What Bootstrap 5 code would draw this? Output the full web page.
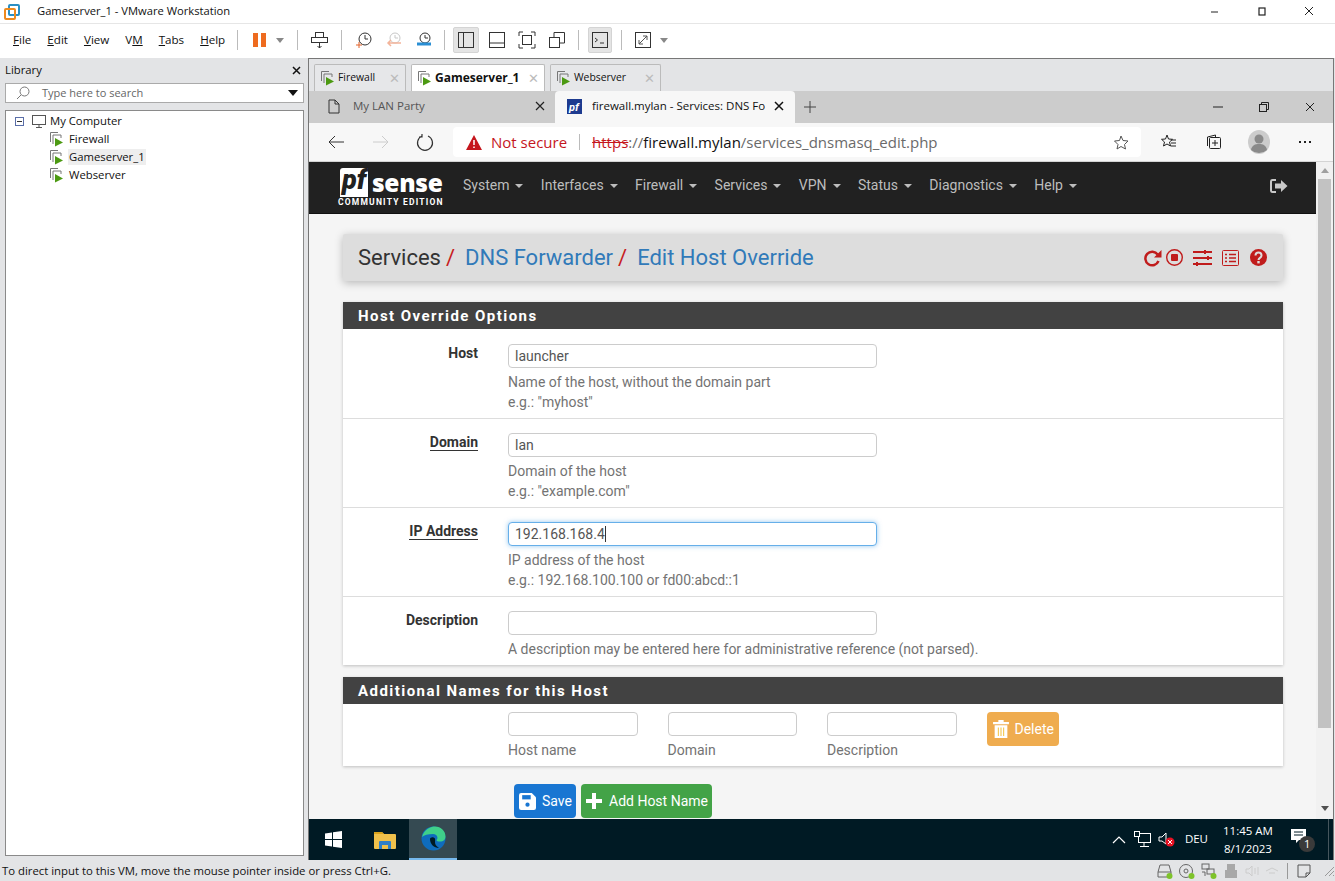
<!DOCTYPE html>
<html lang="en">
<head>
<meta charset="UTF-8" />
<title>Gameserver_1 - VMware Workstation</title>
<link href="https://cdn.jsdelivr.net/npm/bootstrap@5.3.2/dist/css/bootstrap.min.css" rel="stylesheet" />
<script src="https://cdn.jsdelivr.net/npm/bootstrap@5.3.2/dist/js/bootstrap.bundle.min.js" defer></script>
<style>
html, body { height: 881px; overflow: hidden; }
body { width: 1335px; background: #e3e4e6; font-family: "Open Sans", "Noto Sans", "Liberation Sans", sans-serif; font-size: 12px; color: #111; }
svg { display: block; flex: none; }
.m3 { margin-left: 3px; } .m6 { margin-left: 6px; } .m7 { margin-left: 7px; } .m8 { margin-left: 8px; } .m9 { margin-left: 9px; } .m10 { margin-left: 10px; } .m11 { margin-left: 11px; }
.m12 { margin-left: 12px; } .m13 { margin-left: 13px; } .m15 { margin-left: 15px; } .m19 { margin-left: 19px; } .m20 { margin-left: 20px; }
.m26 { margin-left: 26px; } .m27 { margin-left: 27px; } .m28 { margin-left: 28px; } .m29 { margin-left: 29px; }
.win-title { height: 24px; background: #fff; border-bottom: 1px solid #e6e6e6; padding-left: 4px; }
.win-title .ttl { margin-left: 17px; font-size: 11.2px; }
.win-btns { margin-left: auto; padding-right: 20px; gap: 36px; }
.win-toolbar { height: 34px; background: #fff; padding: 0 0 2px 13px; }
.menu-item { font-size: 11.6px; margin-right: 16px; }
.menu-item u { text-underline-offset: 1px; }
.menu-item.end { margin-right: 0; }
.tb-sep { width: 1px; height: 20px; background: #bbb; }
.tb-btn { width: 18px; height: 26px; display: flex; align-items: center; justify-content: center; }
.tb-btn.on { width: 26px; background: #e4e4e4; border: 1px solid #d4d4d4; border-radius: 2px; }
.tb-btn.on.thin { width: 24px; }
.main-area { height: 802px; }
.lib { width: 308px; padding: 0 4px 0 5px; }
.lib-head { height: 25px; font-size: 11.3px; padding: 0 3px 1px 0; }
.lib-search { height: 20px; background: #fff; border: 1px solid #aaa; padding: 0 4px 0 10px; color: #666; font-size: 11px; }
.lib-search .ph { margin-left: 12px; }
.lib-tree { height: 746px; margin-top: 7px; background: #fff; border: 1px solid #8a8a8a; padding: 1px 0 0 9px; }
.tree-row { height: 18px; font-size: 11.3px; }
.tree-vm { margin-left: 34px; }
.tree-vm span { padding: 0 1px; margin-left: 3px; }
.tree-vm.sel span { background: #eee; }
.pane { width: 1026px; border: 1px solid #777; border-bottom: 0; height: 802px; }
.vm-tabs { height: 32px; padding: 5px 0 0 5px; gap: 5px; background: #e3e4e6; }
.vm-tab { height: 27px; background: #e6e7e9; border: 1px solid #bbb; border-bottom: 0; border-radius: 2px 2px 0 0; padding: 0 5px; font-size: 10.4px; }
.vm-tab span.nm { margin-left: 2px; }
.vm-tab.act { background: #fff; font-weight: 700; font-size: 12px; }
.vt-1 { width: 92px; } .vt-2 { width: 134px; } .vt-3 { width: 111px; }
.vm-tab .xx { margin-left: auto; color: #bbb; font-size: 13px; font-weight: 400; line-height: 1; }
.br-tabs { height: 32px; background: #ccc; }
.br-tab { height: 32px; font-size: 11.5px; padding-bottom: 2px; }
.br-tab.idle { width: 246px; color: #555; padding-left: 19px; padding-right: 10px; }
.br-tab.idle .nm { margin-left: 13px; }
.br-tab.act { width: 240px; background: #f7f7f7; border-radius: 4px 4px 0 0; padding-left: 12px; padding-right: 11px; }
.br-tab.act .nm { margin-left: 10px; width: 173px; overflow: hidden; white-space: nowrap; }
.br-tabs .ctl { margin-left: auto; gap: 36px; padding-right: 18px; }
.addr { height: 39px; background: #f7f7f7; padding-left: 18px; border-bottom: 1px solid #d4d4d4; }
.addr-box { width: 688px; height: 30px; background: #fff; border-radius: 4px; margin-left: 19px; padding: 0 12px 0 13px; font-size: 15px; }
.addr .red { color: #c5161d; margin-left: 9px; }
.addr .grey { color: #6a6a6a; }
.addr .strike { color: #c5161d; text-decoration: line-through; }
.addr-sep { width: 1px; height: 16px; background: #bbb; margin: 0 12px; }
.page-wrap { height: 657px; background: #f5f5f5; }
.page { width: 1007px; font-family: Roboto, "Liberation Sans", sans-serif; font-size: 14px; overflow: hidden; }
.sb { width: 17px; background: #f1f1f1; padding-left: 2px; }
.sb-thumb { height: 549px; width: 13px; margin-top: 6px; background: #c2c2c2; }
.sb-arrow { width: 0; height: 0; margin: 6px 0 0 3px; border-left: 4px solid transparent; border-right: 4px solid transparent; border-bottom: 5px solid #a0a0a0; }
.sb-arrow.dn { margin-top: auto; margin-bottom: 8px; border-bottom: 0; border-top: 5px solid #505050; }
.pf-nav { height: 52px; background: #212121; border-bottom: 1px solid #111; padding: 0 28px 4px 29px; color: #bdbdbd; }
.pf-logo { width: 107px; color: #fff; margin-right: 18px; line-height: 1; padding-top: 4px; }
.pf-logo .top { height: 29px; padding-left: 2px; }
.pf-logo .pf { background: #fff; color: #212121; font-style: italic; font-weight: 900; font-size: 27px; padding: 0 0 0 2px; height: 29px; line-height: 25px; width: 28px; border-radius: 3px 0 0 0; }
.pf-logo .se { font-family: "Open Sans", sans-serif; font-weight: 800; font-size: 24.5px; letter-spacing: -.3px; margin-left: 4px; }
.pf-logo .ce { font-size: 8.5px; font-weight: 700; letter-spacing: 1.2px; white-space: nowrap; margin-top: 1px; }
.pf-menu { gap: 17.4px; font-size: 14px; }
.pf-menu span::after { content: ""; display: inline-block; margin-left: 6px; vertical-align: 2px; border-top: 4px solid #bdbdbd; border-left: 4px solid transparent; border-right: 4px solid transparent; }
.pf-out { margin-left: auto; }
.content { padding: 20px 33px 0 34px; }
.crumb { height: 47px; background: #ddd; border-radius: 2px; box-shadow: 0 2px 8px rgba(0,0,0,.25); padding: 0 16px 0 15px; font-size: 22px; color: #333; }
.crumb .sl { color: #c71c22; margin: 0 10px 0 5px; }
.crumb .lnk { color: #317ab9; }
.crumb .tools { margin-left: auto; }
.box { background: #fff; box-shadow: 0 1px 3px rgba(0,0,0,.22); }
.box-head { height: 27px; background: #424242; color: #fff; font-weight: 700; font-size: 15px; letter-spacing: 1.45px; padding: 2px 0 0 15px; }
.box-1 { margin-top: 21px; }
.box-2 { margin-top: 12px; }
.frow { height: 89px; border-bottom: 1px solid #ddd; padding-top: 14px; }
.frow.first { height: 90px; padding-top: 15px; }
.frow.last { height: 68px; border-bottom: 0; }
.flabel { width: 135px; text-align: right; font-weight: 700; color: #333; line-height: 18px; margin-right: 30px; flex: none; }
.flabel.ul span { border-bottom: 1px solid #333; }
.ffield { width: 369px; color: #737373; line-height: 20px; }
.pf-input { width: 369px; height: 24px; background: #fff; border: 1px solid #ccc; border-radius: 4px; color: #555; padding: 0 6px; margin-bottom: 4px; line-height: 22px; }
.pf-input.foc { border-color: #66afe9; box-shadow: 0 0 5px rgba(102,175,233,.7); }
.text-caret { display: inline-block; width: 1px; height: 16px; background: #333; vertical-align: -3px; }
.add-row { height: 62px; padding: 8px 0 0 165px; gap: 30px; }
.add-col { width: 129.5px; color: #737373; }
.add-col .pf-input { width: 100%; margin-bottom: 4px; }
.pf-btn { height: 34px; border-radius: 4px; color: #fff; font-size: 14px; padding: 0 5px; gap: 6px; white-space: nowrap; }
.btn-del { background: #efac4f; width: 72px; padding-left: 6px; }
.btn-save { background: #1976d2; width: 62px; }
.btn-add { background: #43a347; width: 131px; gap: 7px; }
.act-row { padding: 18px 0 0 171px; gap: 5px; }
.taskbar { height: 41px; background: #001a24; color: #fff; font-size: 12px; }
.tk-start { width: 52px; padding-right: 3px; }
.tk-icon { width: 48px; height: 41px; display: flex; align-items: center; justify-content: center; }
.tk-icon.act { background: #354a52; border-bottom: 2px solid #76b9ed; }
.tray { margin-left: auto; align-self: stretch; padding-right: 4px; }
.tray-lang { font-size: 11.5px; margin-left: 10px; padding-bottom: 2px; }
.clock { text-align: center; line-height: 18px; width: 62px; margin: 0 0 0 9px; font-size: 11.5px; }
.show-desk { width: 1px; align-self: stretch; background: #46565d; margin-left: 12px; }
.status { height: 21px; font-size: 11.35px; padding-left: 2px; }
.stat-icons { margin-left: auto; gap: 6px; }
.stat-sep { width: 1px; height: 16px; background: #999; margin: 0 3px 0 2px; }
</style>
</head>
<body>
<div class="win-title d-flex align-items-center">
  <svg width="16" height="16" viewBox="0 0 16 16"><rect x="5" y="1" width="10" height="10" rx="1" fill="none" stroke="#2a8fc4" stroke-width="2"/><rect x="1" y="5" width="10" height="10" rx="1" fill="none" stroke="#ee8a1e" stroke-width="2"/></svg>
  <span class="ttl">Gameserver_1 - VMware Workstation</span>
  <div class="win-btns d-flex align-items-center">
    <svg width="11" height="11" viewBox="0 0 11 11"><path d="M1 6h7" stroke="#222" stroke-width="1"/></svg>
    <svg width="11" height="11" viewBox="0 0 11 11"><rect x="2" y="2" width="6" height="7" fill="none" stroke="#222" stroke-width="1.2"/></svg>
    <svg width="11" height="11" viewBox="0 0 11 11"><path d="M1 1l8 8M9 1l-8 8" stroke="#222" stroke-width="1"/></svg>
  </div>
</div>
<div class="win-toolbar d-flex align-items-center">
  <span class="menu-item"><u>F</u>ile</span>
  <span class="menu-item"><u>E</u>dit</span>
  <span class="menu-item"><u>V</u>iew</span>
  <span class="menu-item">V<u>M</u></span>
  <span class="menu-item"><u>T</u>abs</span>
  <span class="menu-item end"><u>H</u>elp</span>
  <div class="tb-sep m12"></div>
  <svg class="m15" width="13" height="16" viewBox="0 0 13 16"><path d="M0 1h5v14H0zM8 1h5v14H8z" fill="#ee6b1f"/></svg>
  <svg class="m10" width="9" height="5" viewBox="0 0 9 5"><path d="M0 0h8L4 5z" fill="#888"/></svg>
  <div class="tb-sep m12"></div>
  <svg class="m13" width="17" height="20" viewBox="0 0 17 20" fill="none" stroke="#333"><rect x="4.500" y="2.500" width="8" height="5"/><rect x=".5" y="7.500" width="16" height="5"/><path d="M8.500 13v5M6.500 16l2 2 2-2"/></svg>
  <div class="tb-sep m13"></div>
  <div class="tb-btn m13"><svg width="18" height="18" viewBox="0 0 18 18" fill="none" stroke="#333"><circle cx="10" cy="8" r="6"/><path d="M10 4v4h3"/><path d="M1 14h6M4 11v6" stroke="#e2622b"/></svg></div>
  <div class="tb-btn m12"><svg width="18" height="18" viewBox="0 0 18 18" fill="none" stroke="#c8c8c8"><circle cx="10" cy="7" r="5"/><path d="M10 4v3h3"/><path d="M3 12h13M6 9l-3 3 3 3" stroke="#f3b49a" stroke-width="1.500"/></svg></div>
  <div class="tb-btn m12"><svg width="18" height="18" viewBox="0 0 18 18" fill="none" stroke="#333"><circle cx="10" cy="7" r="5"/><path d="M10 4v3h3"/><path d="M2 13h14" stroke="#2a8fd4" stroke-width="3"/></svg></div>
  <div class="tb-sep m11"></div>
  <div class="tb-btn on m8"><svg width="18" height="18" viewBox="0 0 18 18" fill="none" stroke="#333"><rect x="1.500" y="1.500" width="15" height="15"/><path d="M6.500 2v14"/></svg></div>
  <div class="tb-btn m9"><svg width="18" height="18" viewBox="0 0 18 18" fill="none" stroke="#333"><rect x="1.500" y="1.500" width="15" height="15"/><path d="M2 12h14"/></svg></div>
  <div class="tb-btn m12"><svg width="18" height="18" viewBox="0 0 18 18" fill="none" stroke="#333"><path d="M1 5V1h4M13 1h4v4M17 13v4h-4M5 17H1v-4"/><rect x="4.500" y="4.500" width="9" height="9"/></svg></div>
  <div class="tb-btn m12"><svg width="18" height="18" viewBox="0 0 18 18" fill="none" stroke="#333"><rect x="1.500" y="6.500" width="10" height="10"/><path d="M6 6V1.500h10.500V12H12"/></svg></div>
  <div class="tb-sep m12"></div>
  <div class="tb-btn on thin m9"><svg width="18" height="18" viewBox="0 0 18 18" fill="none" stroke="#333"><rect x="1.500" y="1.500" width="15" height="15"/><path d="M4 7l2.500 2L4 11M9 12h4"/></svg></div>
  <div class="tb-sep m9"></div>
  <svg class="m12" width="18" height="18" viewBox="0 0 18 18" fill="none" stroke="#333"><rect x="1.500" y="1.500" width="15" height="15"/><path d="M5 13l8-8M9 5h4v4M5 9v4h4" stroke="#555"/></svg>
  <svg class="m8" width="9" height="5" viewBox="0 0 9 5"><path d="M0 0h8L4 5z" fill="#888"/></svg>
</div>

<div class="main-area d-flex">
  <div class="lib">
    <div class="lib-head d-flex align-items-center justify-content-between"><span>Library</span>
      <svg width="9" height="9" viewBox="0 0 9 9"><path d="M1 1l7 7M8 1L1 8" stroke="#111" stroke-width="1.500"/></svg></div>
    <div class="lib-search d-flex align-items-center">
      <svg width="14" height="14" viewBox="0 0 14 14" fill="none" stroke="#777"><circle cx="8.500" cy="5.500" r="4.500"/><path d="M5 9l-4 4"/></svg>
      <span class="ph">Type here to search</span>
      <svg class="ms-auto" width="11" height="6" viewBox="0 0 11 6"><path d="M0 0h10L5 6z" fill="#111"/></svg>
    </div>
    <div class="lib-tree">
      <div class="tree-row d-flex align-items-center">
        <svg width="9" height="9" viewBox="0 0 9 9" fill="none" stroke="#5a6ea8"><rect x=".5" y=".5" width="8" height="8"/><path d="M2 4.500h5" stroke="#333"/></svg>
        <svg class="m7" width="16" height="14" viewBox="0 0 16 14" fill="none" stroke="#555"><rect x="1.500" y="1.500" width="13" height="9"/><path d="M8 11v2M5 13.500h6"/></svg>
        <span class="m3">My Computer</span>
      </div>
      <div class="tree-row tree-vm d-flex align-items-center"><svg width="16" height="16" viewBox="0 0 16 16"><use href="#vm-ico"/></svg><span>Firewall</span></div>
      <div class="tree-row tree-vm sel d-flex align-items-center"><svg width="16" height="16" viewBox="0 0 16 16"><use href="#vm-ico"/></svg><span>Gameserver_1</span></div>
      <div class="tree-row tree-vm d-flex align-items-center"><svg width="16" height="16" viewBox="0 0 16 16"><use href="#vm-ico"/></svg><span>Webserver</span></div>
    </div>
  </div>

  <div class="pane d-flex flex-column">
    <div class="vm-tabs d-flex">
      <div class="vm-tab vt-1 d-flex align-items-center"><svg width="16" height="16" viewBox="0 0 16 16"><use href="#vm-ico"/></svg><span class="nm">Firewall</span><span class="xx">✕</span></div>
      <div class="vm-tab vt-2 act d-flex align-items-center"><svg width="16" height="16" viewBox="0 0 16 16"><use href="#vm-ico"/></svg><span class="nm">Gameserver_1</span><span class="xx">✕</span></div>
      <div class="vm-tab vt-3 d-flex align-items-center"><svg width="16" height="16" viewBox="0 0 16 16"><use href="#vm-ico"/></svg><span class="nm">Webserver</span><span class="xx">✕</span></div>
    </div>
    <div class="br-tabs d-flex align-items-center">
      <div class="br-tab idle d-flex align-items-center">
        <svg width="12" height="15" viewBox="0 0 12 15" fill="none" stroke="#333"><path d="M1 1h6l4 4v9H1zM7 1v4h4"/></svg>
        <span class="nm">My LAN Party</span>
        <svg class="ms-auto" width="10" height="10" viewBox="0 0 10 10"><path d="M1 1l8 8M9 1l-8 8" stroke="#222" stroke-width="1.200"/></svg>
      </div>
      <div class="br-tab act d-flex align-items-center">
        <svg width="15" height="15" viewBox="0 0 15 15"><rect width="15" height="15" fill="#1d3a8f"/><text x="2" y="11.500" font-size="11" font-style="italic" font-weight="700" fill="#fff" font-family="Roboto, sans-serif">pf</text></svg>
        <span class="nm">firewall.mylan - Services: DNS Fo</span>
        <svg class="ms-auto" width="10" height="10" viewBox="0 0 10 10"><path d="M1 1l8 8M9 1l-8 8" stroke="#111" stroke-width="1.500"/></svg>
      </div>
      <svg class="m8" width="14" height="14" viewBox="0 0 14 14"><path d="M7 1v12M1 7h12" stroke="#444"/></svg>
      <div class="ctl d-flex align-items-center">
        <svg width="10" height="10" viewBox="0 0 10 10"><path d="M0 5h10" stroke="#222"/></svg>
        <svg width="10" height="10" viewBox="0 0 10 10" fill="none" stroke="#222"><rect x=".5" y="2.500" width="7" height="7"/><path d="M2.500 2.500V.5h7v7h-2"/></svg>
        <svg width="10" height="10" viewBox="0 0 10 10"><path d="M1 1l8 8M9 1l-8 8" stroke="#222"/></svg>
      </div>
    </div>
    <div class="addr d-flex align-items-center">
      <svg width="18" height="16" viewBox="0 0 18 16" fill="none" stroke="#333"><path d="M17 8H2M8 2L2 8l6 6"/></svg>
      <svg class="m27" width="18" height="16" viewBox="0 0 18 16" fill="none" stroke="#ccc"><path d="M1 8h15M10 2l6 6-6 6"/></svg>
      <svg class="m26" width="18" height="18" viewBox="0 0 18 18" fill="none" stroke="#333" stroke-width="1.200"><path d="M6 3a7.500 7.500 0 1 0 6 0M6 1v3H3"/></svg>
      <div class="addr-box d-flex align-items-center">
        <svg width="16" height="15" viewBox="0 0 16 15"><path d="M8 0l8 15H0z" fill="#c5161d"/><path d="M8 5v5M8 11.500v1.500" stroke="#fff" stroke-width="1.500"/></svg>
        <span class="red">Not secure</span>
        <div class="addr-sep"></div>
        <span><span class="strike">https</span><span class="grey">://</span>firewall.mylan<span class="grey">/services_dnsmasq_edit.php</span></span>
        <svg class="ms-auto" width="15" height="15" viewBox="0 0 15 15" fill="none" stroke="#555"><path d="M7 1l2 4.500 5 .5-3.500 3.500 1 4.500L7 11.500 3 14l1-4.500L.5 6l5-.5z"/></svg>
      </div>
      <svg class="m20" width="16" height="16" viewBox="0 0 16 16" fill="none" stroke="#222"><path d="M6 1l1.500 4 4 .3L8.500 8l1 4L6 10l-3.500 2 1-4L.5 5.300l4-.3z"/><path d="M10 6h5M10 9h5M10 12h5"/></svg>
      <svg class="m29" width="16" height="16" viewBox="0 0 16 16" fill="none" stroke="#222"><rect x="3.500" y="3.500" width="11" height="11" rx="1"/><path d="M1.500 12V3l8-2v2M9 6v6M6 9h6"/></svg>
      <svg class="m26" width="22" height="24" viewBox="0 0 22 24"><ellipse cx="11" cy="12" rx="11" ry="12" fill="#ccc"/><circle cx="11" cy="9" r="4.500" fill="#8a8a8a"/><path d="M3 20c1-5 4-6 8-6s7 1 8 6a12 12 0 0 1-16 0z" fill="#8a8a8a"/></svg>
      <svg class="m28" width="14" height="4" viewBox="0 0 14 4"><path d="M1 1h2v2H1zM6 1h2v2H6zM11 1h2v2h-2z" fill="#222"/></svg>
    </div>
    <div class="page-wrap d-flex">
      <div class="page">
        <div class="pf-nav d-flex align-items-center">
          <div class="pf-logo d-flex flex-column">
            <div class="top d-flex align-items-center"><span class="pf">pf</span><span class="se">sense</span></div>
            <div class="ce">COMMUNITY EDITION</div>
          </div>
          <div class="pf-menu d-flex">
            <span>System</span><span>Interfaces</span><span>Firewall</span><span>Services</span><span>VPN</span><span>Status</span><span>Diagnostics</span><span>Help</span>
          </div>
          <svg class="pf-out" width="18" height="14" viewBox="0 0 18 14"><path d="M6 1H2.500A1.500 1.500 0 0 0 1 2.500v9A1.500 1.500 0 0 0 2.500 13H6" fill="none" stroke="#c8c8c8" stroke-width="2"/><path d="M5 4.500h6V1l6.500 6-6.500 6V9.500H5z" fill="#c8c8c8"/></svg>
        </div>
        <div class="content">
          <div class="crumb d-flex align-items-center">
            <span>Services</span><span class="sl">/</span>
            <span class="lnk">DNS Forwarder</span><span class="sl">/</span>
            <span class="lnk">Edit Host Override</span>
            <div class="tools d-flex align-items-center">
              <svg width="18" height="18" viewBox="0 0 18 18" fill="none"><path d="M14.500 12a6.800 6.800 0 1 1-.8-6.500" stroke="#c01c1c" stroke-width="2.500"/><path d="M17.500 1v7.500H10z" fill="#c01c1c"/></svg>
              <svg class="ms-1" width="17" height="17" viewBox="0 0 17 17"><circle cx="8.500" cy="8.500" r="7.800" fill="none" stroke="#c01c1c" stroke-width="1.400"/><rect x="5" y="5" width="7" height="7" rx="1" fill="#c01c1c"/></svg>
              <svg class="m10" width="19" height="16" viewBox="0 0 19 16"><path d="M0 2h19M0 8h19M0 14h19" stroke="#c01c1c" stroke-width="2"/><path d="M11 0h2v4h-2zM14 6h2v4h-2zM3 12h2v4H3z" fill="#c01c1c"/></svg>
              <svg class="m10" width="17" height="16" viewBox="0 0 17 16" fill="none" stroke="#c01c1c"><rect x=".5" y=".5" width="16" height="15" rx="1"/><path d="M3 4.500h2M7 4.500h7M3 8h2M7 8h7M3 11.500h2M7 11.500h7" stroke-width="1.500"/></svg>
              <svg class="m11" width="17" height="17" viewBox="0 0 17 17"><circle cx="8.500" cy="8.500" r="8.500" fill="#c01c1c"/><path d="M5.500 6.500c0-4 6-4 6 0 0 2.500-3 2.300-3 4.500" fill="none" stroke="#ddd" stroke-width="2"/><rect x="7.300" y="12" width="2.400" height="2.400" fill="#ddd"/></svg>
            </div>
          </div>

          <div class="box box-1">
            <div class="box-head d-flex align-items-center">Host Override Options</div>
            <div class="frow first d-flex">
              <div class="flabel">Host</div>
              <div class="ffield"><div class="pf-input">launcher</div>Name of the host, without the domain part<br>e.g.: "myhost"</div>
            </div>
            <div class="frow d-flex">
              <div class="flabel ul"><span>Domain</span></div>
              <div class="ffield"><div class="pf-input">lan</div>Domain of the host<br>e.g.: "example.com"</div>
            </div>
            <div class="frow d-flex">
              <div class="flabel ul"><span>IP Address</span></div>
              <div class="ffield"><div class="pf-input foc">192.168.168.4<i class="text-caret"></i></div>IP address of the host<br>e.g.: 192.168.100.100 or fd00:abcd::1</div>
            </div>
            <div class="frow last d-flex">
              <div class="flabel">Description</div>
              <div class="ffield text-nowrap"><div class="pf-input"></div>A description may be entered here for administrative reference (not parsed).</div>
            </div>
          </div>

          <div class="box box-2">
            <div class="box-head d-flex align-items-center">Additional Names for this Host</div>
            <div class="add-row d-flex">
              <div class="add-col"><div class="pf-input"></div>Host name</div>
              <div class="add-col"><div class="pf-input"></div>Domain</div>
              <div class="add-col"><div class="pf-input"></div>Description</div>
              <div class="pf-btn btn-del d-flex align-items-center">
                <svg width="16" height="18" viewBox="0 0 15 17"><path d="M0 2h5V0h5v2h5v2H0zM1.500 5h12v12h-12z" fill="#fff"/><path d="M5 7v8M7.500 7v8M10 7v8" stroke="#f3c64a"/></svg>
                <span>Delete</span>
              </div>
            </div>
          </div>

          <div class="act-row d-flex">
            <div class="pf-btn btn-save d-flex align-items-center">
              <svg width="17" height="17" viewBox="0 0 16 16"><path d="M2 0h10l4 4v10a2 2 0 0 1-2 2H2a2 2 0 0 1-2-2V2a2 2 0 0 1 2-2z" fill="#fff"/><rect x="3" y="2" width="8" height="4" fill="#1976d2"/><circle cx="8" cy="11" r="2" fill="#1976d2"/></svg>
              <span>Save</span>
            </div>
            <div class="pf-btn btn-add d-flex align-items-center">
              <svg width="16" height="16" viewBox="0 0 16 16"><path d="M6 0h4v6h6v4h-6v6H6v-6H0V6h6z" fill="#fff"/></svg>
              <span>Add Host Name</span>
            </div>
          </div>
        </div>
      </div>
      <div class="sb d-flex flex-column">
        <div class="sb-arrow"></div>
        <div class="sb-thumb"></div>
        <div class="sb-arrow dn"></div>
      </div>
    </div>
    <div class="taskbar d-flex align-items-center">
      <div class="tk-start d-flex justify-content-center">
        <svg width="17" height="17" viewBox="0 0 17 17"><path d="M0 2.500L7 1.500v6.500H0zM8 1.300L17 0v8H8zM0 9h7v6.500L0 14.500zM8 9h9v8L8 15.700z" fill="#fff"/></svg>
      </div>
      <div class="tk-icon">
        <svg width="22" height="18" viewBox="0 0 22 18"><path d="M0 2a1 1 0 0 1 1-1h7l2 2h11a1 1 0 0 1 1 1v13a1 1 0 0 1-1 1H1a1 1 0 0 1-1-1z" fill="#f0c14b"/><path d="M0 1h8l2 2H0z" fill="#d9a21b"/><path d="M5 18v-7a1 1 0 0 1 1-1h10a1 1 0 0 1 1 1v7h-3v-4H8v4z" fill="#2f7fc8"/></svg>
      </div>
      <div class="tk-icon act">
        <svg width="25" height="25" viewBox="0 0 25 25"><circle cx="12.500" cy="12.500" r="12" fill="#0f6cbd"/><path d="M1 11C3 3 10 .5 14 .5c6 0 10.500 4.500 10.500 10 0 3-2 5-5.500 5-2 0-3.500-.5-3.500-1.500 2-1.500 1-6-3.500-6C7 8 3 9 1 11z" fill="#3fd08a"/><path d="M9 13c0 5 4 9 9 9-3-2-4-3.500-4-6 0-2 .5-3-.5-4-1.500-1.500-4.500-.5-4.500 1z" fill="#001a24"/></svg>
      </div>
      <div class="tray d-flex align-items-center">
        <svg width="14" height="8" viewBox="0 0 14 8" fill="none" stroke="#fff" stroke-width="1.200"><path d="M1 7l6-6 6 6"/></svg>
        <svg class="m8" width="17" height="17" viewBox="0 0 17 17" fill="none" stroke="#fff"><rect x="4.500" y="2.500" width="12" height="9"/><path d="M10 12v3M6 15.500h9"/><rect x=".5" y=".5" width="5" height="5" fill="#001a24"/></svg>
        <svg class="m7" width="17" height="15" viewBox="0 0 17 15"><path d="M1 5h3l4-4v11L4 9H1z" fill="none" stroke="#fff"/><circle cx="12" cy="10" r="4.500" fill="#e81123"/><path d="M10 8l4 4M14 8l-4 4" stroke="#fff"/></svg>
        <span class="tray-lang">DEU</span>
        <div class="clock">11:45 AM<br>8/1/2023</div>
        <svg class="m11" width="26" height="26" viewBox="0 0 26 26"><path d="M1 2h15v11h-7l-3 3v-3H1z" fill="#fff"/><path d="M4 5h9M4 8h9" stroke="#001a24"/><circle cx="17" cy="17" r="8" fill="#3a3a3a"/><text x="14" y="21" font-size="11" fill="#fff" font-family="Open Sans, sans-serif">1</text></svg>
        <div class="show-desk"></div>
      </div>
    </div>
  </div>
</div>

<div class="status d-flex align-items-center">
  <span>To direct input to this VM, move the mouse pointer inside or press Ctrl+G.</span>
  <div class="stat-icons d-flex align-items-center">
    <svg width="16" height="16" viewBox="0 0 16 16" fill="none" stroke="#666"><path d="M1 9l2-7h9l2 7v5H1z"/><path d="M1 9h13"/><circle cx="12.500" cy="13" r="3" fill="#7ec32a" stroke="none"/></svg>
    <svg width="16" height="16" viewBox="0 0 16 16" fill="none" stroke="#666"><circle cx="7" cy="8" r="6.500"/><circle cx="7" cy="8" r="2"/><circle cx="12.500" cy="13" r="3" fill="#7ec32a" stroke="none"/></svg>
    <svg width="16" height="16" viewBox="0 0 16 16" fill="none" stroke="#666"><rect x="1" y="1" width="7" height="5"/><rect x="6" y="6" width="7" height="5"/><path d="M1 9h3v4"/><circle cx="12.500" cy="13" r="3" fill="#7ec32a" stroke="none"/></svg>
    <svg width="16" height="16" viewBox="0 0 16 16"><path d="M4 1h8v6H4zM2 7h12v8H2z" fill="#a8a8a8"/></svg>
    <svg width="14" height="14" viewBox="0 0 14 14" fill="none" stroke="#ccc"><path d="M1 5h3l3-3v10L4 9H1zM10 4v6M13 3v8"/></svg>
    <svg width="14" height="14" viewBox="0 0 14 14" fill="none" stroke="#ccc"><path d="M1 7l6-3 6 3M4 9h6"/></svg>
    <div class="stat-sep"></div>
    <svg width="14" height="14" viewBox="0 0 14 14" fill="none" stroke="#555"><path d="M1 1h12v8l-4 4H1zM13 9H9v4"/></svg>
    <svg class="m6" width="12" height="14" viewBox="0 0 12 14" stroke="#999"><path d="M11 3l-9 9M11 7l-5 5M11 11l-1 1"/></svg>
  </div>
</div>

<svg width="0" height="0" class="position-absolute"><defs>
  <g id="vm-ico" fill="none" stroke="#777"><path d="M1.500 11V1.500H9"/><path d="M4 13V4h8v3"/><path d="M6 7l8 4.500L6 15.500z" fill="#4c9a12" stroke="none"/></g>
</defs></svg>
</body>
</html>
